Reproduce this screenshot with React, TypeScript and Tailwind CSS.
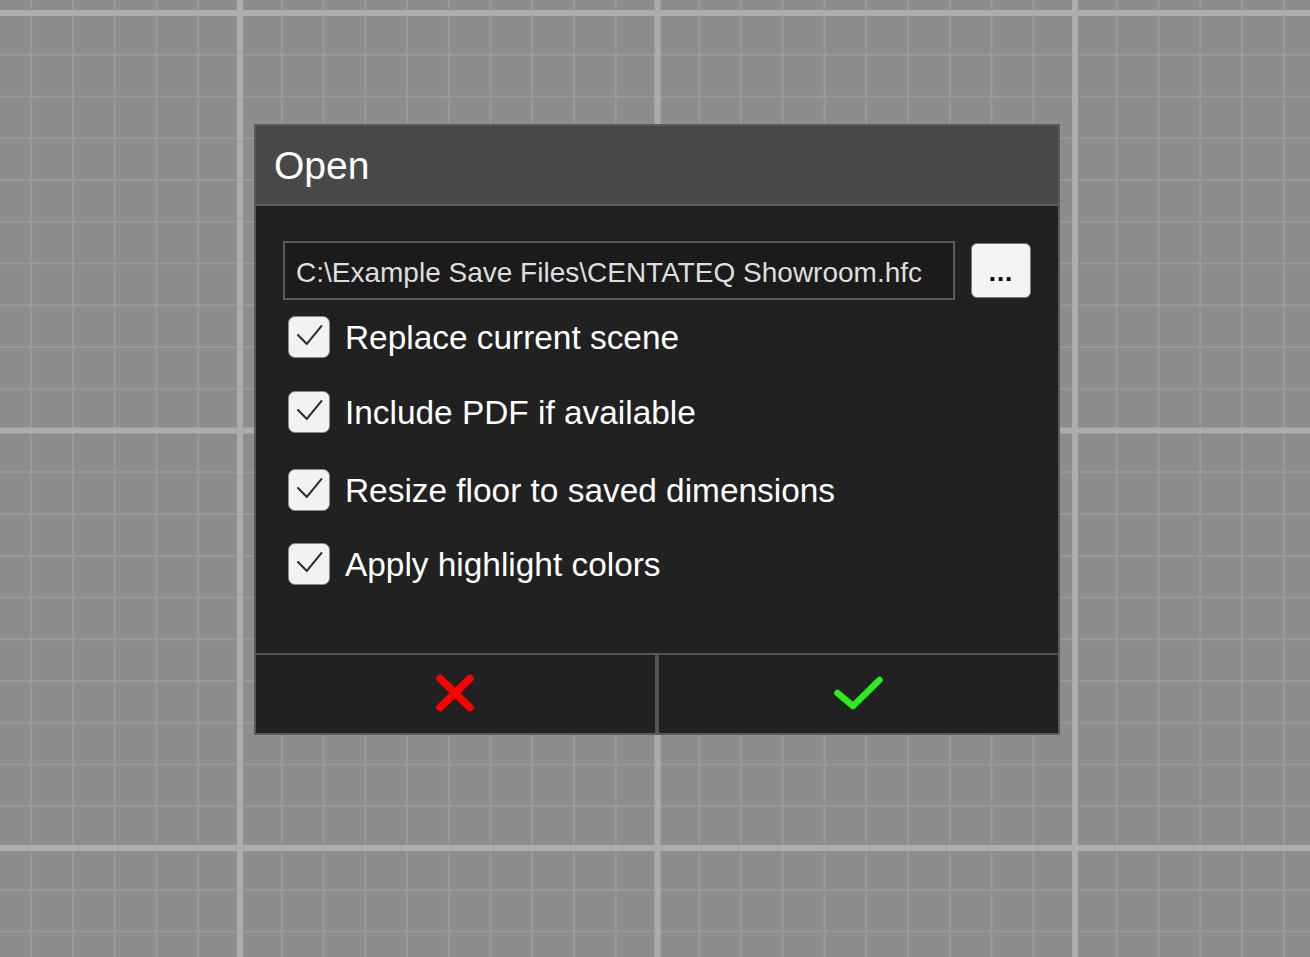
import React from 'react';

const options = [
  { label: 'Replace current scene', mt: 'mt-[16px]' },
  { label: 'Include PDF if available', mt: 'mt-[33px]' },
  { label: 'Resize floor to saved dimensions', mt: 'mt-[36px]' },
  { label: 'Apply highlight colors', mt: 'mt-[32px]' },
];

const CheckBox = () => (
  <div className="w-[42px] h-[42px] shrink-0 rounded-[7px] bg-[#f2f2f2] border border-[#8a8a8a] flex items-center justify-center">
    <svg width="42" height="42" viewBox="0 0 42 42" fill="none">
      <polyline
        points="9.5,19 18.7,28.3 34,9.5"
        stroke="#2e2e2e"
        strokeWidth="2.2"
        strokeLinecap="round"
        strokeLinejoin="round"
      />
    </svg>
  </div>
);

export default function App() {
  return (
    <div
      className="w-[1310px] h-[957px] overflow-hidden bg-[#8d8d8d] bg-[linear-gradient(to_right,#adadad_6px,transparent_6px),linear-gradient(to_bottom,#adadad_6px,transparent_6px),linear-gradient(to_right,#999999_2px,transparent_2px),linear-gradient(to_bottom,#999999_2px,transparent_2px)] bg-[length:417.5px_417.5px,417.5px_417.5px,41.75px_41.75px,41.75px_41.75px] bg-[position:237px_0px,0px_10px,30.25px_0px,0px_12px] pt-[124px] pl-[254px]"
      style={{ fontFamily: '"Liberation Sans", Arial, sans-serif' }}
    >
      <div className="w-[806px] border-2 border-[#5a5a5a] bg-[#212121] flex flex-col">
        {/* Title */}
        <div className="h-[80px] bg-[#484848] border-b-2 border-[#5e5e5e] flex items-center px-[18px]">
          <span className="text-[39px] text-white leading-none">Open</span>
        </div>

        {/* Body */}
        <div className="h-[447px] pl-[27px] pr-[27px] pt-[35px] flex flex-col">
          <div className="flex items-center">
            <div className="w-[672px] h-[59px] border-2 border-[#5a5a5a] bg-[#1b1b1b] flex items-center px-[11px]">
              <span className="text-[28px] text-[#dedede] leading-none whitespace-nowrap mt-[4px]">
                C:\Example Save Files\CENTATEQ Showroom.hfc
              </span>
            </div>
            <button className="ml-[16px] w-[60px] h-[55px] rounded-[6px] bg-[#f4f4f4] border border-[#7a7a7a] flex items-center justify-center">
              <span className="text-[26px] font-bold text-black leading-none tracking-[1px] mt-[2px]">...</span>
            </button>
          </div>

          {options.map((o) => (
            <div key={o.label} className={`flex items-center pl-[5px] ${o.mt}`}>
              <CheckBox />
              <span className="ml-[15px] text-[33.4px] text-white leading-none whitespace-nowrap mt-[1px]">{o.label}</span>
            </div>
          ))}
        </div>

        {/* Footer */}
        <div className="h-[80px] border-t-2 border-[#555555] grid grid-cols-2">
          <button className="border-r-2 border-[#555555] flex items-center justify-center bg-[#212121]">
            <svg width="40" height="38" viewBox="0 0 40 38" fill="none" className="-mt-[2px] -ml-[2px]">
              <path d="M5 4.5 L35 33.5 M35 4.5 L5 33.5" stroke="#ff0000" strokeWidth="7.5" strokeLinecap="round" />
            </svg>
          </button>
          <button className="border-l-2 border-[#555555] flex items-center justify-center bg-[#212121]">
            <svg width="54" height="38" viewBox="0 0 54 38" fill="none" className="-mt-[2px]">
              <polyline
                points="5.5,19 21,32 47.5,6"
                stroke="#28ee1b"
                strokeWidth="6.5"
                strokeLinecap="round"
                strokeLinejoin="round"
              />
            </svg>
          </button>
        </div>
      </div>
    </div>
  );
}
